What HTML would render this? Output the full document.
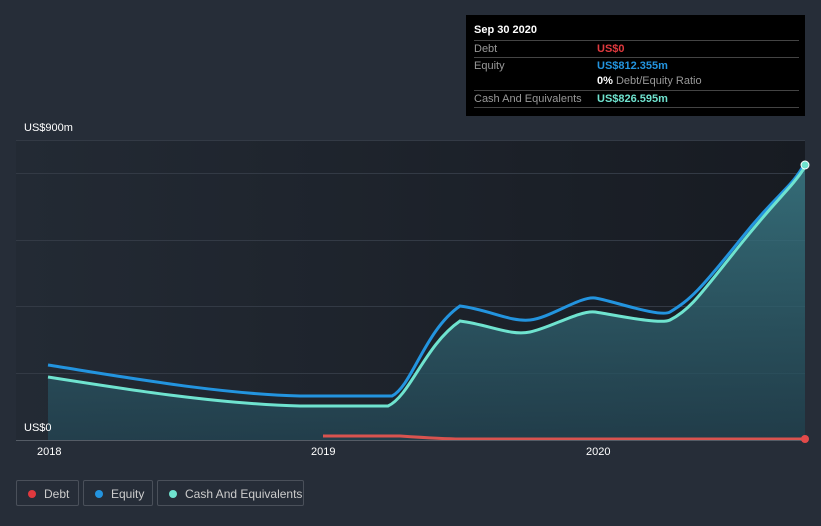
<!DOCTYPE html><html><head><style>
body{margin:0;width:821px;height:526px;background:#262d38;font-family:"Liberation Sans",sans-serif;overflow:hidden;position:relative}
.t{position:absolute;font-size:11px;color:#fff}
.tip{position:absolute;left:466px;top:15px;width:339px;height:101px;background:#000}
.tip .r{position:absolute;left:8px;width:325px;border-top:1px solid #444;font-size:11px;color:#999;height:16px;line-height:16px}
.leg{position:absolute;top:480px;height:26px;border:1px solid #4a505a;border-radius:2px;color:#ccc;font-size:12px;line-height:26px;box-sizing:border-box}
.leg i{position:absolute;left:11px;top:9px;width:8px;height:8px;border-radius:50%}
.leg span{position:absolute;left:27px;top:0}
</style></head><body>
<svg width="821" height="526" style="position:absolute;left:0;top:0">
<defs><linearGradient id="g" x1="0" y1="0" x2="1" y2="0"><stop offset="0" stop-color="#232a34"/><stop offset="1" stop-color="#171b22"/></linearGradient>
<linearGradient id="f" x1="0" y1="0" x2="0" y2="1"><stop offset="0" stop-color="#3a7a86" stop-opacity=".85"/><stop offset="1" stop-color="#234452" stop-opacity=".8"/></linearGradient></defs>
<rect x="16" y="140" width="789" height="300" fill="url(#g)"/>
<g stroke="#333a45" stroke-width="1"><line x1="16" y1="140.5" x2="805" y2="140.5"/><line x1="16" y1="173.5" x2="805" y2="173.5"/><line x1="16" y1="240.5" x2="805" y2="240.5"/><line x1="16" y1="306.5" x2="805" y2="306.5"/><line x1="16" y1="373.5" x2="805" y2="373.5"/></g>
<path d="M48,377 C130,390 220,404 300,406 L388,406 C410,396 425,345 460,321 C490,325 510,336 530,332 S580,310 595,312 S660,325 670,320 C690,310 700,295 740,245 S790,190 805,167 L805,440 L48,440Z" fill="url(#f)"/>
<path d="M48,365 C130,378 220,394 300,396 L392,396 C412,386 425,330 460,306 C490,310 510,322 530,320 S580,296 595,298 S660,318 670,312 C690,300 700,290 740,240 S790,190 805,163" fill="none" stroke="#2394df" stroke-width="3"/>
<path d="M48,377 C130,390 220,404 300,406 L388,406 C410,396 425,345 460,321 C490,325 510,336 530,332 S580,310 595,312 S660,325 670,320 C690,310 700,295 740,245 S790,190 805,167" fill="none" stroke="#6fe3cf" stroke-width="3"/>
<path d="M323,436 L400,436 C430,438 445,439 460,439 L805,439" fill="none" stroke="#d9534f" stroke-width="3"/>
<line x1="16" y1="440.5" x2="805" y2="440.5" stroke="#555c66"/>
<circle cx="805" cy="165" r="4" fill="#6fe3cf" stroke="#fff" stroke-width="1"/>
<circle cx="805" cy="439" r="4" fill="#e24a4a"/>
</svg>
<div class="t" style="left:24px;top:122px">US$900m</div>
<div class="t" style="left:24px;top:422px">US$0</div>
<div class="t" style="left:37px;top:446px">2018</div>
<div class="t" style="left:311px;top:446px">2019</div>
<div class="t" style="left:586px;top:446px">2020</div>
<div class="tip">
<div style="position:absolute;left:8px;top:9px;color:#fff;font-weight:bold;font-size:11px">Sep 30 2020</div>
<div class="r" style="top:25px">Debt<b style="position:absolute;left:123px;color:#e0393e">US$0</b></div>
<div class="r" style="top:42px">Equity<b style="position:absolute;left:123px;color:#2394df">US$812.355m</b></div>
<div class="r" style="top:58px;border:none"><span style="position:absolute;left:123px"><b style="color:#fff">0%</b> Debt/Equity Ratio</span></div>
<div class="r" style="top:75px">Cash And Equivalents<b style="position:absolute;left:123px;color:#6fe3cf">US$826.595m</b></div>
<div class="r" style="top:92px;height:0"></div>
</div>
<div class="leg" style="left:16px;width:63px"><i style="background:#e0393e"></i><span>Debt</span></div>
<div class="leg" style="left:83px;width:70px"><i style="background:#2394df"></i><span>Equity</span></div>
<div class="leg" style="left:157px;width:147px"><i style="background:#6fe3cf"></i><span>Cash And Equivalents</span></div>
</body></html>
